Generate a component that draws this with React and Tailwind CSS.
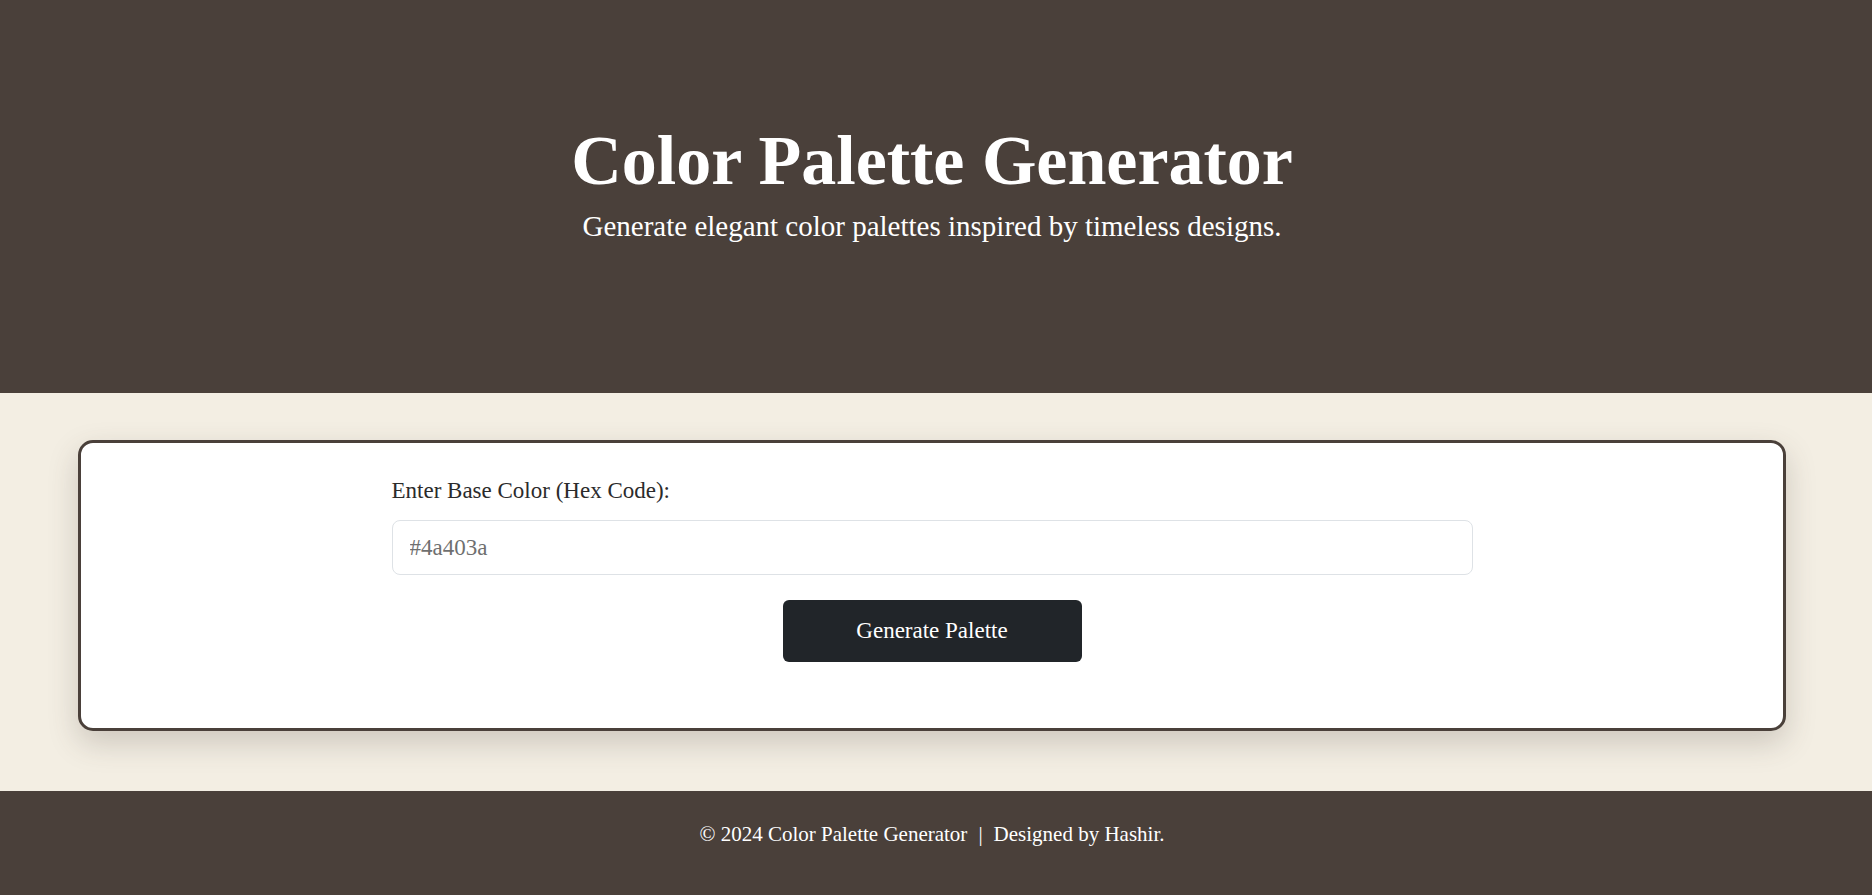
import React, { useState } from "react";

function App() {
  const [color, setColor] = useState("");

  return (
    <div className="min-h-screen flex flex-col font-['Liberation_Serif',serif]">
      <header className="bg-[#4a403a] h-[393px] pt-[126px] pr-2 text-center text-white">
        <h1 className="text-[70px] leading-none font-bold">
          Color Palette Generator
        </h1>
        <p className="text-[29px] leading-none mt-[16px]">
          Generate elegant color palettes inspired by timeless designs.
        </p>
      </header>

      <main className="bg-[#f3eee3] pt-[47px] pb-[60px] pl-[78px] pr-[86px]">
        <div className="bg-white border-[3px] border-[#4a403a] rounded-[15px] shadow-[0_12px_30px_rgba(74,64,58,0.22)] pt-[36px] pb-[66px]">
          <div className="w-[1081px] mx-auto flex flex-col">
            <label
              htmlFor="baseColor"
              className="text-[23px] leading-none text-[#2b2b2b]"
            >
              Enter Base Color (Hex Code):
            </label>
            <input
              id="baseColor"
              type="text"
              value={color}
              onChange={(e) => setColor(e.target.value)}
              placeholder="#4a403a"
              className="mt-[18px] h-[55px] w-full px-[17px] text-[23px] text-[#333] placeholder:text-[#6f6f6f] bg-white border border-[#dee2e6] rounded-lg outline-none"
            />
            <button
              type="button"
              className="mt-[25px] mx-auto w-[299px] h-[62px] bg-[#212529] text-white text-[23px] rounded-md"
            >
              Generate Palette
            </button>
          </div>
        </div>
      </main>

      <footer className="bg-[#4a403a] flex-1 min-h-[104px] pt-[28px] pr-2 text-center text-white text-[21px]">
        © 2024 Color Palette Generator<span className="mx-[11px]">|</span>Designed by Hashir.
      </footer>
    </div>
  );
}

export default App;
